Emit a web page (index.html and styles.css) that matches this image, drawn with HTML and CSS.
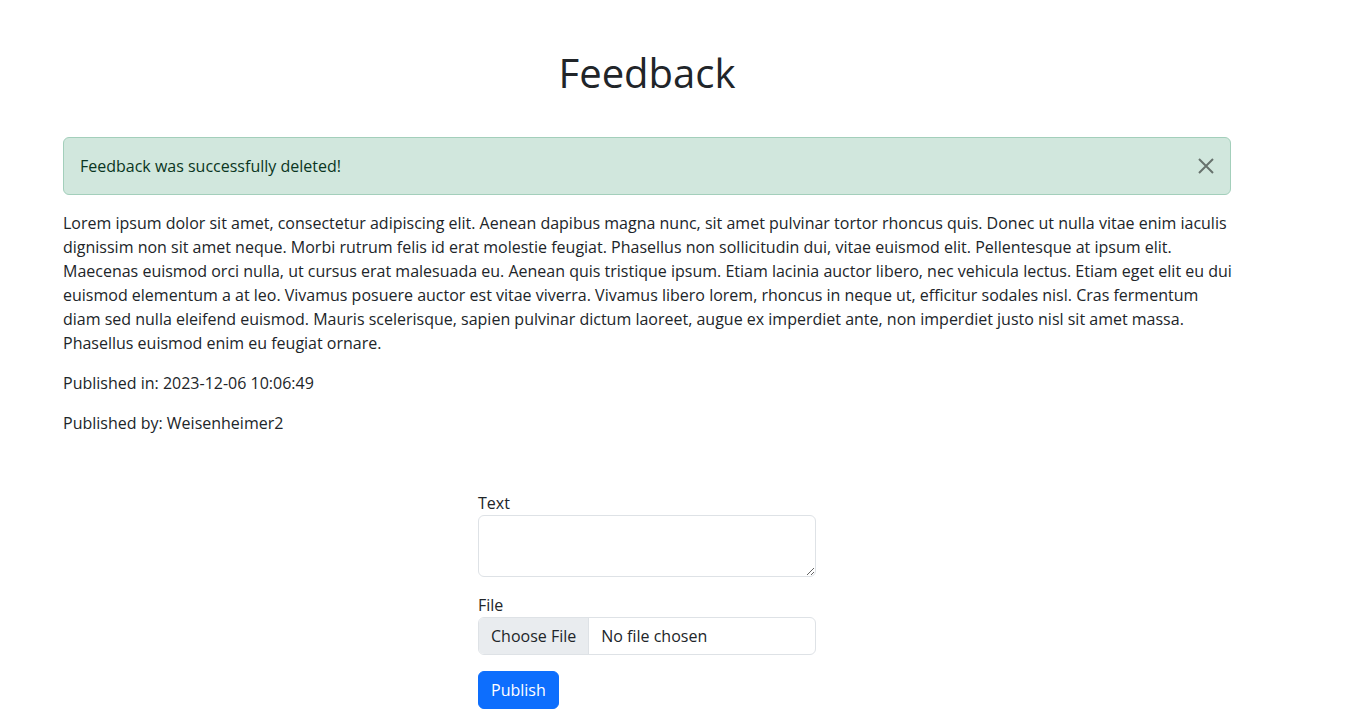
FILE: index.html
```html
<!DOCTYPE html>
<html lang="en">
<head>
<meta charset="utf-8">
<title>Feedback</title>
<link rel="stylesheet" href="styles.css">
</head>
<body>
<main class="page">
  <h1 class="title">Feedback</h1>
  <div class="alert">
    <span>Feedback was successfully deleted!</span>
    <button class="btn-close" type="button" aria-label="Close">
      <svg viewBox="0 0 16 16" width="16" height="16"><path d="M1 1L15 15M15 1L1 15" stroke="#000" stroke-width="2" fill="none"/></svg>
    </button>
  </div>
  <p class="body-text">Lorem ipsum dolor sit amet, consectetur adipiscing elit. Aenean dapibus magna nunc, sit amet pulvinar tortor rhoncus quis. Donec ut nulla vitae enim iaculis dignissim non sit amet neque. Morbi rutrum felis id erat molestie feugiat. Phasellus non sollicitudin dui, vitae euismod elit. Pellentesque at ipsum elit. Maecenas euismod orci nulla, ut cursus erat malesuada eu. Aenean quis tristique ipsum. Etiam lacinia auctor libero, nec vehicula lectus. Etiam eget elit eu dui euismod elementum a at leo. Vivamus posuere auctor est vitae viverra. Vivamus libero lorem, rhoncus in neque ut, efficitur sodales nisl. Cras fermentum diam sed nulla eleifend euismod. Mauris scelerisque, sapien pulvinar dictum laoreet, augue ex imperdiet ante, non imperdiet justo nisl sit amet massa. Phasellus euismod enim eu feugiat ornare.</p>
  <p class="meta">Published in: 2023-12-06 10:06:49</p>
  <p class="meta">Published by: Weisenheimer2</p>

  <form class="form">
    <div class="field">
      <label class="label" for="text">Text</label>
      <textarea id="text" class="control textarea" rows="2"></textarea>
    </div>
    <div class="field">
      <label class="label">File</label>
      <div class="file">
        <span class="file-btn">Choose File</span>
        <span class="file-name">No file chosen</span>
      </div>
    </div>
    <button type="button" class="btn-primary">Publish</button>
  </form>
</main>
</body>
</html>
```
FILE: styles.css
```css
* { box-sizing: border-box; }
html, body { margin: 0; padding: 0; }
body {
  font-family: "Open Sans", "Noto Sans", "Liberation Sans", sans-serif;
  font-size: 16px;
  line-height: 1.5;
  color: #212529;
  background: #fff;
}
.page {
  width: 1168px;
  margin-left: 63px;
}
.title {
  margin: 0;
  padding: 49px 0 40px;
  text-align: center;
  font-size: 40px;
  font-weight: 500;
  line-height: 1.2;
}
.alert {
  position: relative;
  padding: 16px 48px 16px 16px;
  margin-bottom: 16px;
  background: #d1e7dd;
  border: 1px solid #a3cfbb;
  border-radius: 6px;
  color: #0a3622;
}
.btn-close {
  position: absolute;
  top: 0;
  right: 0;
  width: 48px;
  height: 56px;
  padding: 0;
  border: 0;
  background: transparent;
  display: flex;
  align-items: center;
  justify-content: center;
  opacity: 0.5;
  cursor: pointer;
}
.btn-close svg { display: block; width: 16px; height: 16px; }
.body-text, .meta { margin: 0 0 16px; }
.body-text { margin-right: -6px; }
.form {
  width: 338px;
  margin: 56px auto 0;
}
.field { margin-bottom: 16px; }
.label { display: block; }
.control {
  display: block;
  width: 100%;
  border: 1px solid #dee2e6;
  border-radius: 6px;
  font: inherit;
  color: #212529;
  background: #fff;
}
.textarea {
  height: 62px;
  padding: 6px 12px;
  resize: vertical;
}
.file {
  display: flex;
  height: 38px;
  border: 1px solid #dee2e6;
  border-radius: 6px;
  overflow: hidden;
}
.file-btn {
  display: flex;
  align-items: center;
  padding: 0 12px;
  background: #e9ecef;
  border-right: 1px solid #dee2e6;
}
.file-name {
  display: flex;
  align-items: center;
  padding: 0 12px;
}
.btn-primary {
  display: block;
  height: 38px;
  padding: 6px 12px;
  border: 1px solid #0d6efd;
  border-radius: 6px;
  background: #0d6efd;
  color: #fff;
  font: inherit;
  line-height: 1.5;
}
```
